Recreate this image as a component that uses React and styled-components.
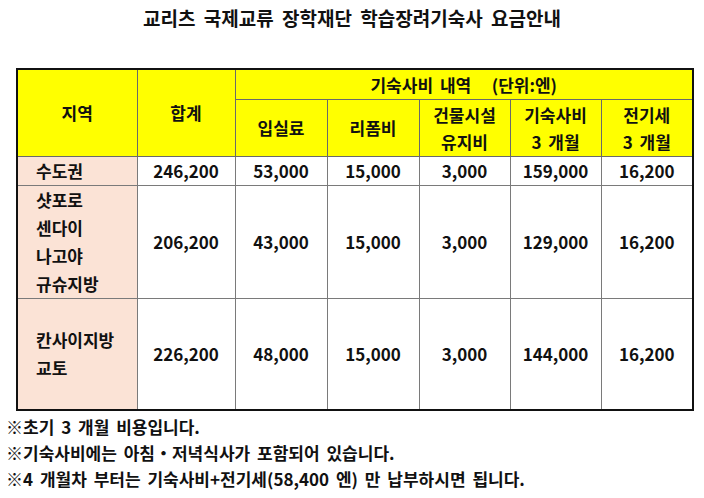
import React from "react";
import styled, { createGlobalStyle } from "styled-components";

const GlobalStyle = createGlobalStyle`
  body {
    margin: 0;
    background: #fff;
    font-family: "Noto Sans CJK KR", "Noto Sans", sans-serif;
    color: #111;
  }
`;

const Page = styled.div`
  width: 704px;
  height: 498px;
  display: flex;
  flex-direction: column;
  overflow: hidden;
`;

const Title = styled.h1`
  margin: 0;
  height: 36px;
  line-height: 36px;
  text-align: center;
  font-size: 19px;
  font-weight: 700;
  word-spacing: 4px;
`;

const TableWrap = styled.div`
  padding: 32px 0 0 16px;
`;

const Table = styled.table`
  border-collapse: collapse;
  table-layout: fixed;
  width: 676px;
  border: 2px solid #111;
  font-size: 17px;
  font-weight: 700;
  word-spacing: 3px;
`;

const Th = styled.th`
  background: #ffff00;
  border: 1px solid #6a6a6a;
  font-weight: 700;
  padding: 0;
  line-height: 27px;
  text-align: center;
`;

const Td = styled.td`
  border: 1px solid #7a7a7a;
  background: ${p => (p.region ? "#fbe3d6" : "#fff")};
  text-align: ${p => (p.region ? "left" : "center")};
  padding: ${p => (p.region ? "0 0 0 18px" : "0")};
  line-height: 28px;
`;

const Row = styled.tr`
  height: ${p => p.h}px;
`;

const Notes = styled.div`
  padding: 3px 0 0 6px;
  font-size: 17px;
  font-weight: 700;
  line-height: 26px;
  word-spacing: 3px;
`;

const cols = [120, 98, 92, 92, 91, 91, 92];

const rows = [
  { h: 29, region: ["수도권"], vals: ["246,200", "53,000", "15,000", "3,000", "159,000", "16,200"] },
  { h: 113, region: ["샷포로", "센다이", "나고야", "규슈지방"], vals: ["206,200", "43,000", "15,000", "3,000", "129,000", "16,200"] },
  { h: 112, region: ["칸사이지방", "교토"], vals: ["226,200", "48,000", "15,000", "3,000", "144,000", "16,200"] }
];

export default function App() {
  return (
    <Page>
      <GlobalStyle />
      <Title>교리츠 국제교류 장학재단 학습장려기숙사 요금안내</Title>
      <TableWrap>
        <Table>
          <colgroup>
            {cols.map((w, i) => (
              <col key={i} style={{ width: w }} />
            ))}
          </colgroup>
          <thead>
            <Row h={30}>
              <Th rowSpan={2}>지역</Th>
              <Th rowSpan={2}>합계</Th>
              <Th colSpan={5}>기숙사비 내역 &nbsp;&nbsp;(단위:엔)</Th>
            </Row>
            <Row h={57}>
              <Th>입실료</Th>
              <Th>리폼비</Th>
              <Th>
                건물시설
                <br />
                유지비
              </Th>
              <Th>
                기숙사비
                <br />3 개월
              </Th>
              <Th>
                전기세
                <br />3 개월
              </Th>
            </Row>
          </thead>
          <tbody>
            {rows.map((r, i) => (
              <Row h={r.h} key={i}>
                <Td region>
                  {r.region.map((t, j) => (
                    <div key={j}>{t}</div>
                  ))}
                </Td>
                {r.vals.map((v, j) => (
                  <Td key={j}>{v}</Td>
                ))}
              </Row>
            ))}
          </tbody>
        </Table>
      </TableWrap>
      <Notes>
        <div>※초기 3 개월 비용입니다.</div>
        <div>※기숙사비에는 아침・저녁식사가 포함되어 있습니다.</div>
        <div>※4 개월차 부터는 기숙사비+전기세(58,400 엔) 만 납부하시면 됩니다.</div>
      </Notes>
    </Page>
  );
}
